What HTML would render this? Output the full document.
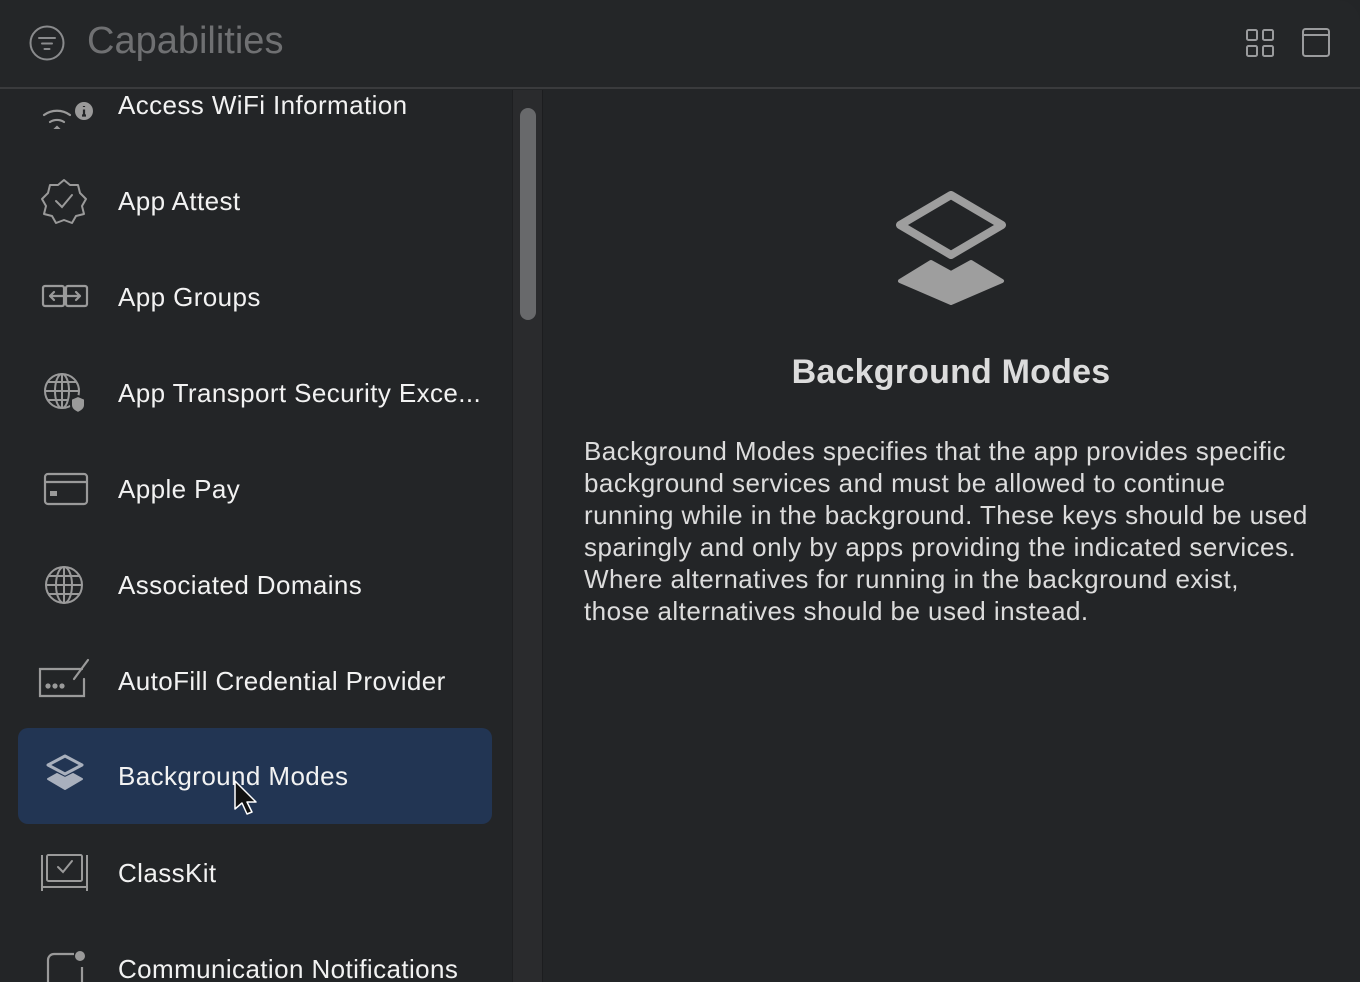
<!DOCTYPE html>
<html><head><meta charset="utf-8"><style>
*{margin:0;padding:0;box-sizing:border-box}
html,body{width:1360px;height:982px;overflow:hidden}
body{background:#232527;font-family:"Liberation Sans",sans-serif;position:relative;color:#fff}
.hdr{position:absolute;left:0;top:0;width:1360px;height:89px;background:#242628;border-bottom:2px solid #3a3b3d;border-top-right-radius:22px}
.title{position:absolute;left:87px;top:20px;font-size:38px;color:#6f7072}
.list{position:absolute;left:0;top:90px;width:512px;height:892px;overflow:hidden}
.row{position:absolute;left:18px;width:474px;height:96px;border-radius:10px}
.row.sel{background:#223553}
.row span{position:absolute;left:100px;top:33px;font-size:26px;letter-spacing:0.4px;white-space:nowrap;color:#f2f2f2}
.row svg{position:absolute;left:20px;top:24px}
.track{position:absolute;left:512px;top:90px;width:31px;height:892px;background:#2a2b2d;border-left:1px solid #1e1f21;border-right:1px solid #1c1d1f}
.thumb{position:absolute;left:520px;top:108px;width:16px;height:212px;border-radius:8px;background:#68696b}
.h2{position:absolute;left:690px;width:522px;top:353px;text-align:center;font-size:34px;letter-spacing:0.2px;font-weight:bold;color:#dcdcdc}
.desc{position:absolute;left:584px;top:435px;font-size:26px;letter-spacing:0.45px;line-height:32px;color:#dcdcdc;white-space:nowrap}
</style></head><body>
<div class="hdr">
<svg style="position:absolute;left:28px;top:24px" width="38" height="38" viewBox="0 0 38 38" fill="none" stroke="#8a8b8d" stroke-width="2"><circle cx="19" cy="19" r="16.5"/><path d="M11 14h16M14 19.5h10M16.5 25h5" stroke-linecap="round"/></svg>
<div class="title">Capabilities</div>
<svg style="position:absolute;left:1245px;top:28px" width="30" height="30" viewBox="0 0 30 30" fill="none" stroke="#9a9b9d" stroke-width="2"><rect x="2" y="2" width="10" height="10" rx="1.5"/><rect x="18" y="2" width="10" height="10" rx="1.5"/><rect x="2" y="18" width="10" height="10" rx="1.5"/><rect x="18" y="18" width="10" height="10" rx="1.5"/></svg>
<svg style="position:absolute;left:1301px;top:27px" width="30" height="30" viewBox="0 0 30 30" fill="none" stroke="#9a9b9d" stroke-width="2"><rect x="2" y="2" width="26" height="27" rx="2.5"/><path d="M2 8h26"/></svg>
</div>

<div class="list">
<div class="row" style="top:-33px"><svg width="56" height="48" viewBox="0 0 56 48" fill="none" stroke="#9a9a9a" stroke-width="2.2" stroke-linecap="round"><path d="M6 34a22 22 0 0 1 26 0M12 41a13 13 0 0 1 14 0"/><path d="M17 48l2-2 2 2z" fill="#9a9a9a"/></svg><svg style="left:56px;top:44px" width="20" height="20" viewBox="0 0 20 20"><circle cx="10" cy="10" r="9" fill="#9a9a9a"/><path d="M10 5v1M10 8.5v6M8 14.5h4" stroke="#232527" stroke-width="2.2"/></svg><span>Access WiFi Information</span></div>
<div class="row" style="top:63px"><svg width="52" height="48" viewBox="0 0 52 48" fill="none" stroke="#9a9a9a" stroke-width="2"><path d="M26 3l6 5 8 0 2 8 6 6-4 7 2 8-8 2-4 7-8-3-8 3-4-7-8-2 2-8-4-7 6-6 2-8 8 0z" stroke-linejoin="round"/><path d="M18 24l6 6 10-12" stroke-linecap="round"/></svg><span>App Attest</span></div>
<div class="row" style="top:159px"><svg width="52" height="48" viewBox="0 0 52 48" fill="none" stroke="#9a9a9a" stroke-width="2.2"><rect x="5" y="13" width="21" height="20" rx="2"/><rect x="28" y="13" width="21" height="20" rx="2"/><path d="M12 23h30M16 19l-4 4 4 4M38 19l4 4-4 4" stroke-linecap="round" stroke-linejoin="round"/></svg><span>App Groups</span></div>
<div class="row" style="top:255px"><svg width="52" height="48" viewBox="0 0 52 48" fill="none" stroke="#9a9a9a" stroke-width="2"><circle cx="24" cy="22" r="17"/><ellipse cx="24" cy="22" rx="7" ry="17"/><path d="M7 22h34M10 13h28M10 31h20M24 5v34"/><path d="M40 27l7 3v6c0 4-3 6-7 8-4-2-7-4-7-8v-6z" fill="#9a9a9a" stroke="#232527" stroke-width="2"/></svg><span>App Transport Security Exce...</span></div>
<div class="row" style="top:351px"><svg width="52" height="48" viewBox="0 0 52 48" fill="none" stroke="#9a9a9a" stroke-width="2.2"><rect x="7" y="9" width="42" height="30" rx="3"/><path d="M7 17h42"/><rect x="12" y="26" width="7" height="5" fill="#9a9a9a" stroke="none"/></svg><span>Apple Pay</span></div>
<div class="row" style="top:447px"><svg width="52" height="48" viewBox="0 0 52 48" fill="none" stroke="#9a9a9a" stroke-width="2"><circle cx="26" cy="24" r="18"/><ellipse cx="26" cy="24" rx="8" ry="18"/><path d="M8 24h36M11 15h30M11 33h30M26 6v36"/></svg><span>Associated Domains</span></div>
<div class="row" style="top:543px"><svg width="56" height="48" viewBox="0 0 56 48" fill="none" stroke="#9a9a9a" stroke-width="2.2" stroke-linecap="round"><path d="M44 12h-42v27h44v-17"/><path d="M50 3l-14 19" /><circle cx="10" cy="29" r="1.5" fill="#9a9a9a"/><circle cx="17" cy="29" r="1.5" fill="#9a9a9a"/><circle cx="24" cy="29" r="1.5" fill="#9a9a9a"/></svg><span>AutoFill Credential Provider</span></div>
<div class="row sel" style="top:638px"><svg width="52" height="48" viewBox="0 0 52 48"><path d="M27 4l17 9-17 9-17-9z" fill="none" stroke="#a9b0bd" stroke-width="3" stroke-linejoin="round"/><path d="M19 22l8 4 8-4 9 5-17 10-17-10z" fill="#a9b0bd" stroke="#a9b0bd" stroke-linejoin="round" stroke-width="2"/></svg><span>Background Modes</span></div>
<div class="row" style="top:735px"><svg width="56" height="48" viewBox="0 0 56 48" fill="none" stroke="#9a9a9a" stroke-width="2"><path d="M4 6v36M49 6v36M4 38h45"/><rect x="9" y="6" width="35" height="26" rx="1.5"/><path d="M20 18l5 5 9-11" stroke-linecap="round"/></svg><span>ClassKit</span></div>
<div class="row" style="top:831px"><svg width="56" height="48" viewBox="0 0 56 48" fill="none" stroke="#9a9a9a" stroke-width="2.2"><path d="M36 9h-20a6 6 0 0 0-6 6v33M44 22v26"/><circle cx="42" cy="11" r="5" fill="#9a9a9a" stroke="none"/></svg><span>Communication Notifications</span></div>
</div>

<svg style="position:absolute;left:233px;top:779px" width="28" height="40" viewBox="0 0 28 40"><path d="M2 2v28l7-6 5 11 5-2-5-10h9z" fill="#111" stroke="#fff" stroke-width="1.5" stroke-linejoin="round"/></svg>

<div class="track"></div><div class="thumb"></div>

<svg style="position:absolute;left:896px;top:191px" width="110" height="114" viewBox="0 0 110 114"><path d="M55 4l51 30-51 30-51-30z" fill="none" stroke="#9e9e9e" stroke-width="8" stroke-linejoin="round"/><path d="M35 71l20 11 20-11 31 19-51 22-51-22z" fill="#9e9e9e" stroke="#9e9e9e" stroke-width="4" stroke-linejoin="round"/></svg>
<div class="h2">Background Modes</div>
<div class="desc">Background Modes specifies that the app provides specific<br>background services and must be allowed to continue<br>running while in the background. These keys should be used<br>sparingly and only by apps providing the indicated services.<br>Where alternatives for running in the background exist,<br>those alternatives should be used instead.</div>
</body></html>
